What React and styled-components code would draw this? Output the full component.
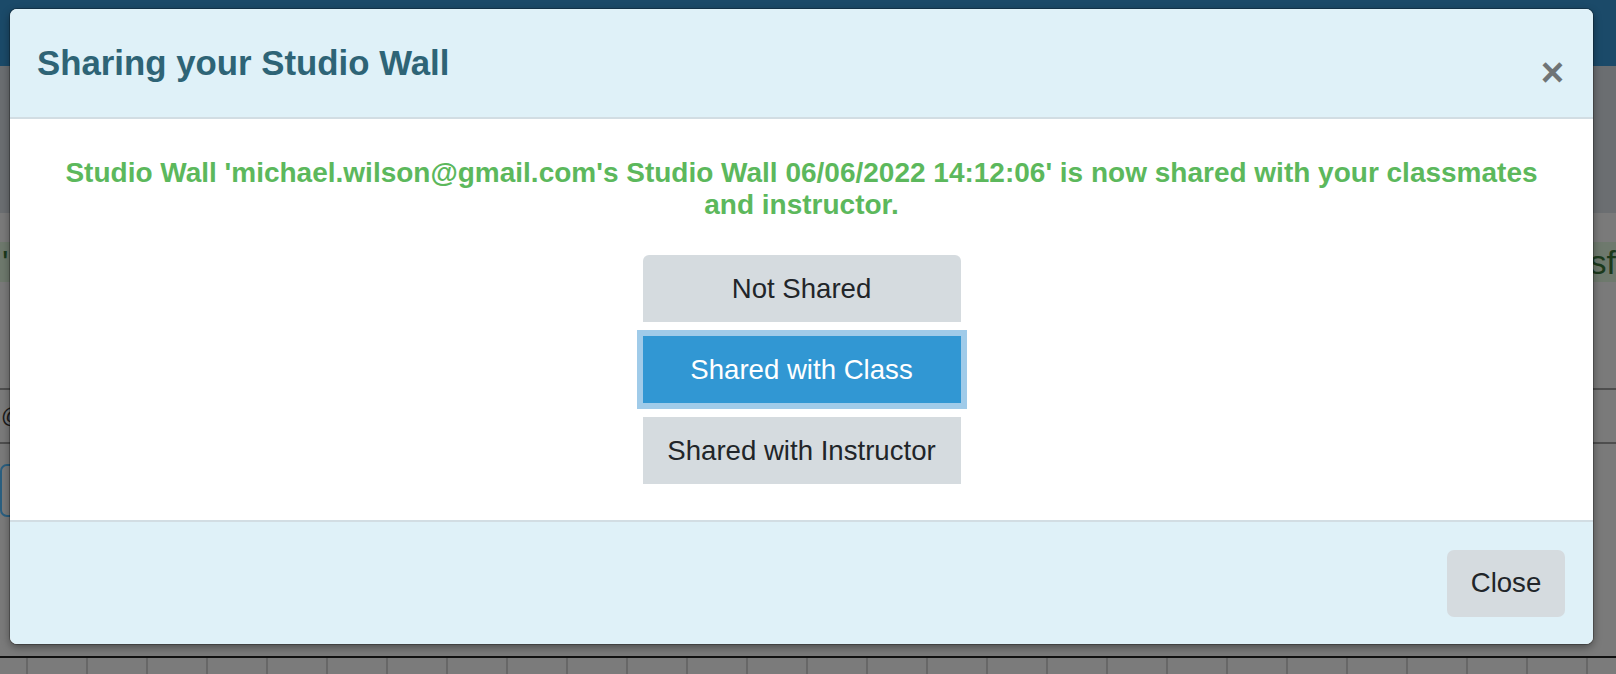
import React, { useState } from 'react';
import styled, { createGlobalStyle } from 'styled-components';

const GlobalStyle = createGlobalStyle`
  html, body {
    margin: 0;
    padding: 0;
    background: #7a7a7a;
    font-family: "Liberation Sans", Arial, Helvetica, sans-serif;
  }
  * { box-sizing: border-box; }
`;

const Page = styled.div`
  position: relative;
  width: 1616px;
  height: 674px;
  overflow: hidden;
  display: flex;
  flex-direction: column;
`;

const TopBar = styled.div`
  height: 66px;
  flex: none;
  background: #1b4a69;
`;
const Toolbar = styled.div`
  height: 147px;
  flex: none;
  background: #6b6e71;
`;
const Main = styled.div`
  flex: 1;
  background: #7a7a7a;
  padding-top: 29px;
  display: flex;
  flex-direction: column;
`;
const TitleBand = styled.div`
  height: 40px;
  background: #6e796d;
  display: flex;
  justify-content: space-between;
  align-items: center;
  font-size: 34px;
  color: #1c3a1c;
  overflow: hidden;
  white-space: nowrap;
`;
const TableRow = styled.div`
  margin-top: ${({ $gap }) => $gap}px;
  height: 56px;
  border-top: 2px solid #4e4e4e;
  border-bottom: 2px solid #4e4e4e;
  display: flex;
  align-items: center;
  font-size: 22px;
  color: #1a1a1a;
  white-space: nowrap;
  padding-left: 1px;
`;
const GhostInput = styled.div`
  margin-top: 20px;
  width: 60px;
  height: 53px;
  border: 2px solid #2a5f80;
  border-radius: 7px;
`;
const BottomLine = styled.div`
  height: 2px;
  flex: none;
  background: #111;
`;
const GridRow = styled.div`
  height: 16px;
  flex: none;
  background: #7b7b7b;
  display: flex;
  padding-left: 26px;
`;
const GridCell = styled.div`
  width: 60px;
  flex: none;
  border-left: 2px solid #676767;
`;

/* ---- modal ---- */
const Modal = styled.div`
  position: absolute;
  top: 9px;
  left: 10px;
  width: 1583px;
  height: 635px;
  border-radius: 7px;
  overflow: hidden;
  display: flex;
  flex-direction: column;
  background: #fff;
  box-shadow: 0 0 0 1px rgba(0, 0, 0, 0.25), 0 3px 9px rgba(0, 0, 0, 0.4);
`;
const Header = styled.div`
  height: 110px;
  flex: none;
  background: #dff1f8;
  border-bottom: 2px solid #d2dde3;
  padding: 0 29px 0 27px;
  display: flex;
  align-items: center;
  justify-content: space-between;
`;
const Title = styled.h4`
  margin: 0;
  font-size: 34.8px;
  font-weight: 700;
  line-height: 1.2;
  color: #2e6476;
`;
const CloseX = styled.button`
  border: 0;
  background: none;
  padding: 0;
  margin-top: 18px;
  font-family: "Liberation Sans", Arial, sans-serif;
  font-size: 40px;
  font-weight: 700;
  line-height: 1;
  color: #6f7476;
  cursor: pointer;
`;
const Body = styled.div`
  flex: 1;
  padding: 38px 48px 36px;
  display: flex;
  flex-direction: column;
  align-items: center;
  gap: 34px;
`;
const Message = styled.p`
  margin: 0;
  text-align: center;
  color: #5cb85c;
  font-size: 28px;
  font-weight: 700;
  line-height: 32px;
`;
const ButtonGroup = styled.div`
  width: 318px;
  display: flex;
  flex-direction: column;
  gap: 14px;
`;
const ShareButton = styled.button`
  height: 67px;
  border: 0;
  border-radius: ${({ $first }) => ($first ? '6px 6px 0 0' : '0')};
  font-family: "Liberation Sans", Arial, sans-serif;
  font-size: 27.6px;
  color: ${({ $active }) => ($active ? '#fff' : '#212529')};
  background: ${({ $active }) => ($active ? '#3197d3' : '#d5dbdf')};
  box-shadow: ${({ $active }) => ($active ? '0 0 0 6px #a0cbe9' : 'none')};
  cursor: pointer;
`;
const Footer = styled.div`
  height: 124px;
  flex: none;
  background: #dff1f8;
  border-top: 2px solid #d2dde3;
  padding: 0 28px;
  display: flex;
  align-items: center;
  justify-content: flex-end;
`;
const FooterButton = styled.button`
  width: 118px;
  height: 67px;
  border: 0;
  border-radius: 7px;
  background: #d5dbdf;
  color: #212529;
  font-family: "Liberation Sans", Arial, sans-serif;
  font-size: 27.6px;
  cursor: pointer;
`;

const options = ['Not Shared', 'Shared with Class', 'Shared with Instructor'];

export default function App() {
  const [shared, setShared] = useState('Shared with Class');

  return (
    <Page>
      <GlobalStyle />
      <TopBar />
      <Toolbar />
      <Main>
        <TitleBand>
          <span style={{ marginLeft: 2 }}>'</span>
          <span>sf</span>
        </TitleBand>
        <TableRow $gap={106}>
          <span>@.</span>
        </TableRow>
        <GhostInput />
      </Main>
      <BottomLine />
      <GridRow>
        {Array.from({ length: 27 }).map((_, i) => (
          <GridCell key={i} />
        ))}
      </GridRow>

      <Modal>
        <Header>
          <Title>Sharing your Studio Wall</Title>
          <CloseX aria-label="Close">×</CloseX>
        </Header>
        <Body>
          <Message>
            Studio Wall 'michael.wilson@gmail.com's Studio Wall 06/06/2022 14:12:06' is now shared with your classmates and instructor.
          </Message>
          <ButtonGroup>
            {options.map((opt, idx) => (
              <ShareButton
                key={opt}
                $first={idx === 0}
                $active={shared === opt}
                onClick={() => setShared(opt)}
              >
                {opt}
              </ShareButton>
            ))}
          </ButtonGroup>
        </Body>
        <Footer>
          <FooterButton>Close</FooterButton>
        </Footer>
      </Modal>
    </Page>
  );
}
